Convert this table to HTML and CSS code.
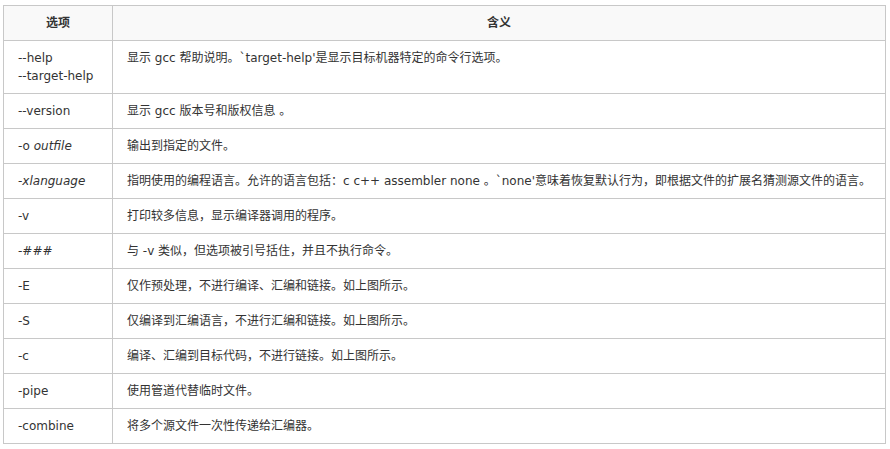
FILE: index.html
```html
<!DOCTYPE html>
<html lang="zh-CN">
<head>
<meta charset="utf-8">
<title>gcc 选项</title>
<link rel="stylesheet" href="styles.css">
</head>
<body>
<div class="wrap">
<table class="opts">
  <thead>
    <tr><th class="c1">选项</th><th class="c2">含义</th></tr>
  </thead>
  <tbody>
    <tr><td>--help<br>--target-help</td><td>显示 gcc 帮助说明。`target-help'是显示目标机器特定的命令行选项。</td></tr>
    <tr><td>--version</td><td>显示 gcc 版本号和版权信息 。</td></tr>
    <tr><td>-o <i>outfile</i></td><td>输出到指定的文件。</td></tr>
    <tr><td>-<i>xlanguage</i></td><td>指明使用的编程语言。允许的语言包括：c c++ assembler none 。`none'意味着恢复默认行为，即根据文件的扩展名猜测源文件的语言。</td></tr>
    <tr><td>-v</td><td>打印较多信息，显示编译器调用的程序。</td></tr>
    <tr><td>-<i>###</i></td><td>与 -v 类似，但选项被引号括住，并且不执行命令。</td></tr>
    <tr><td>-E</td><td>仅作预处理，不进行编译、汇编和链接。如上图所示。</td></tr>
    <tr><td>-S</td><td>仅编译到汇编语言，不进行汇编和链接。如上图所示。</td></tr>
    <tr><td>-c</td><td>编译、汇编到目标代码，不进行链接。如上图所示。</td></tr>
    <tr><td>-pipe</td><td>使用管道代替临时文件。</td></tr>
    <tr><td>-combine</td><td>将多个源文件一次性传递给汇编器。</td></tr>
  </tbody>
</table>
</div>
</body>
</html>
```
FILE: styles.css
```css
html, body {
  margin: 0;
  padding: 0;
  background: #fff;
}
.wrap {
  padding: 5px 0 0 3px;
}
.opts {
  border-collapse: collapse;
  width: 883px;
  table-layout: fixed;
  font-family: "DejaVu Sans", "Noto Sans CJK SC", sans-serif;
  font-size: 12px;
  line-height: 18px;
  color: #333;
}
.opts th, .opts td {
  border: 1px solid #c8c8c8;
  padding: 8px 14px;
  text-align: left;
  vertical-align: top;
  font-weight: normal;
}
.opts th {
  background: #f9f9f9;
  text-align: center;
  font-weight: bold;
}
.opts .c1 { width: 108px; padding: 8px 0; }
.opts i { font-style: italic; }
```
